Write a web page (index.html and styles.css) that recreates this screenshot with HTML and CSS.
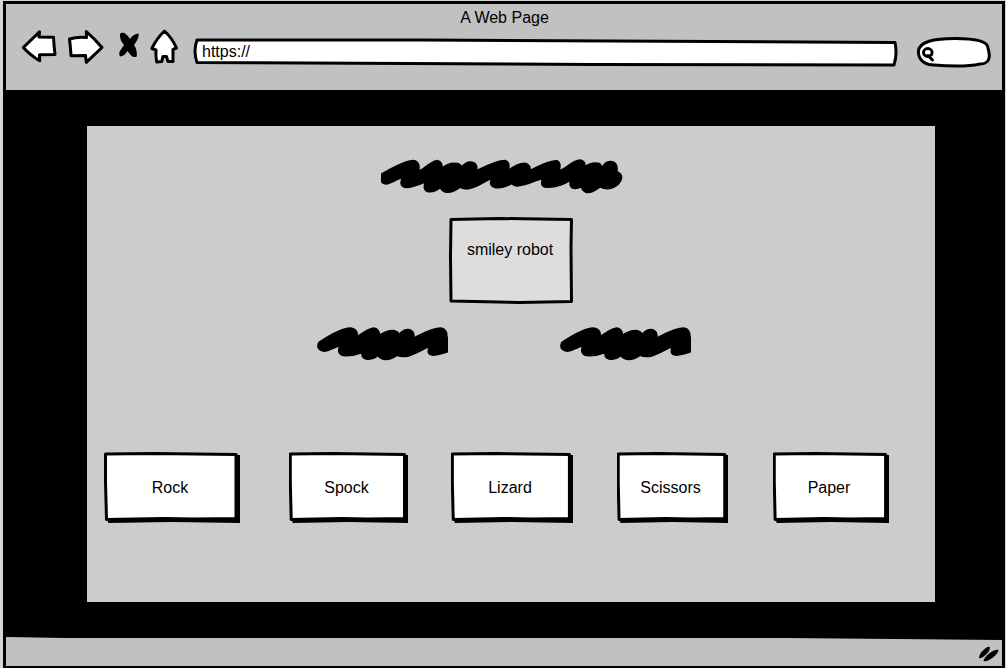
FILE: index.html
```html
<!DOCTYPE html>
<html lang="en">
<head>
<meta charset="utf-8">
<meta name="viewport" content="width=device-width, initial-scale=1">
<title>A Web Page</title>
<link rel="stylesheet" href="styles.css">
</head>
<body>
<svg class="defs" aria-hidden="true">
  <symbol id="card" viewBox="0 0 136 71" preserveAspectRatio="none">
    <path class="shadow" d="M4 3H136V71L68 70L4 71Z"/>
    <path class="ink face" d="M1.5 2L50 1.5L132 2.5V66.5L90 67L60 66.5L2.5 67.5L1.5 30Z"/>
  </symbol>
  <symbol id="scribble" viewBox="36 33 393 105">
    <path class="marker" d="M42 83C72 63 108 40 136 40C154 43 159 54 154 66C172 58 187 42 207 40C221 42 224 54 221 64C235 52 250 47 265 47C275 49 281 54 283 60C291 46 305 43 314 45C326 50 328 58 325 70C352 57 382 40 407 40C421 42 427 52 424 66L435 70V108C410 115 395 120 385 120C368 118 368 110 374 94C352 102 330 117 307 123C295 125 285 124 277 120C265 128 255 134 240 133C228 132 222 126 218 120C210 130 195 133 182 131C172 128 170 120 173 112C155 119 135 122 115 121C102 118 97 104 107 92C92 92 75 106 58 108C40 106 36 95 42 83Z"/>
  </symbol>
</svg>
<div class="window">
  <header class="chrome">
    <div class="title">A Web Page</div>
    <div class="toolbar">
      <button class="tool" type="button" aria-label="Back">
        <svg width="36" height="40" viewBox="21 28 36 40"><path class="ink" d="M23.3 47.500L39.500 31.800L39 37L53.500 37.200Q54 46 55 54.500L39.500 54.700L39.700 60.800Q30 55 23.300 47.500Z"/></svg>
      </button>
      <button class="tool" type="button" aria-label="Forward">
        <svg width="36" height="40" viewBox="67 28 36 40"><path class="ink" d="M69.500 39Q77 36.500 86.500 37.500L86.300 31.600Q95 39 102 47.500L86.300 62.300L85.500 55.500L71 55.700Q70.500 47 69.500 39Z"/></svg>
      </button>
      <button class="tool" type="button" aria-label="Stop">
        <svg width="28" height="40" viewBox="113 28 28 40"><path class="solid" d="M120 34Q121 32 124.500 33Q128 35.500 130 39Q133 34 138.700 33.500Q139.300 38 134 45Q137.500 50 136.800 56.500Q134 58 131 55.500Q129 53 127.500 51Q124.500 56 120 56.500Q118 53 121 49.500L124 45Q119.500 40 120 34Z"/></svg>
      </button>
      <button class="tool" type="button" aria-label="Home">
        <svg width="28" height="40" viewBox="151 28 28 40"><path class="ink" d="M164.500 31Q172 38 176.500 48L173 49.500L173 61.500L168 61.500L166.500 56.500H163L161.700 61.500L156.700 62Q155.500 55 156 50L151.800 48.500Q157 38 164.500 31Z"/></svg>
      </button>
      <div class="field address">
        <svg class="sketch" viewBox="0 0 705 30" preserveAspectRatio="none" aria-hidden="true"><path class="ink" d="M4 2L230 2L702 4.500Q704.500 16 701 27L400 26.500L4 24.500Q0 13 4 2Z"/></svg>
        <input type="text" value="https://" aria-label="Address">
      </div>
      <div class="field search">
        <svg class="sketch" viewBox="0 0 75 32" preserveAspectRatio="none" aria-hidden="true"><path class="ink" d="M2.500 17C1 5 20 2.500 39 2.500C54 2.500 72 4 72 12C75 22 73 28 64 28C50 31 30 30 18 29C10 29 3 25 2.500 17Z"/><path class="ink lens" d="M7.500 16.500a4.300 3.900 0 1 0 8.600 0a4.300 3.900 0 1 0-8.600 0M12 19.500L16.500 24"/></svg>
        <input type="search" aria-label="Search">
      </div>
    </div>
  </header>
  <main class="stage">
    <section class="panel">
      <div class="notes">
        <svg width="246" height="35" viewBox="33 27 738 105" role="img" aria-label="Heading"><path class="marker" d="M36 72C67 55 102 32 130 32C147 35 149 50 144 65C165 58 181 34 202 32C214 34 217 45 214 57C228 44 245 39 262 41C270 43 274 48 275 53C286 38 300 35 311 39C321 44 321 53 318 64C346 50 377 32 405 32C418 36 418 49 413 64C431 50 450 39 467 41C478 45 481 53 479 62C506 50 536 32 560 33C571 37 571 50 566 63C589 58 606 32 630 31C641 33 645 42 644 51C658 41 675 38 688 41C693 45 695 50 696 55C703 40 715 33 727 36C740 40 742 52 740 66C755 71 758 84 749 96C738 112 715 122 690 110C675 120 665 129 648 126C638 122 636 116 635 110C620 116 606 116 602 107C600 102 601 97 602 90C581 103 555 113 530 111C514 110 512 99 521 84C497 89 465 108 440 107C432 106 428 103 425 100C410 108 390 115 375 112C360 108 359 96 368 84C347 88 325 113 290 116C280 116 273 112 270 111C258 120 245 128 230 126C218 124 214 118 211 111C200 122 185 126 172 124C163 120 162 108 167 95C146 104 125 112 108 112C92 110 90 96 100 82C82 84 65 100 48 101C32 100 28 85 36 72Z"/></svg>
      </div>
      <div class="robot">
        <svg class="sketch" viewBox="0 0 125 87" preserveAspectRatio="none" aria-hidden="true"><path class="ink" d="M2 2.500L50 1.500L122.500 2.500L122 30L122.500 84.500L70 85.500L2 84L1.500 40Z"/></svg>
        <span>smiley robot</span>
      </div>
      <div class="notes scores">
        <svg width="131" height="35" role="img" aria-label="Player score"><use href="#scribble"/></svg>
        <svg width="131" height="35" role="img" aria-label="Robot score"><use href="#scribble"/></svg>
      </div>
      <div class="choices">
        <button class="choice rock" type="button"><svg class="sketch" aria-hidden="true"><use href="#card"/></svg><span>Rock</span></button>
        <button class="choice spock" type="button"><svg class="sketch" aria-hidden="true"><use href="#card"/></svg><span>Spock</span></button>
        <button class="choice lizard" type="button"><svg class="sketch" aria-hidden="true"><use href="#card"/></svg><span>Lizard</span></button>
        <button class="choice scissors" type="button"><svg class="sketch" aria-hidden="true"><use href="#card"/></svg><span>Scissors</span></button>
        <button class="choice paper" type="button"><svg class="sketch" aria-hidden="true"><use href="#card"/></svg><span>Paper</span></button>
      </div>
    </section>
  </main>
  <footer class="status">
    <svg class="sketch" viewBox="0 0 996 29" preserveAspectRatio="none" aria-hidden="true"><path class="bar" d="M0 0L60 1H780L996 3V29H0Z"/></svg>
    <svg class="grip" width="20" height="16" viewBox="980 646 20 16" aria-hidden="true"><path class="solid" d="M980 658Q980 654 985 649.500Q989 645.500 991 647.500Q991 651 986.500 655Q982.500 659 980 658ZM984.500 661Q985 657.500 990 653.500Q996 649 999.500 650Q999 653.500 994 657.500Q988 662 984.500 661Z"/></svg>
  </footer>
</div>
</body>
</html>
```

FILE: styles.css
```css
* {
  box-sizing: border-box;
}

body {
  margin: 0;
  background: #d3d8d5;
  color: #000;
  font: 16px/20px "Liberation Sans", Arial, sans-serif;
}

button,
input {
  margin: 0;
  padding: 0;
  border: 0;
  background: none;
  color: inherit;
  font: inherit;
}

svg {
  display: block;
}

.defs {
  position: absolute;
  width: 0;
  height: 0;
}

.window {
  display: flex;
  flex-direction: column;
  min-height: calc(100vh - 1px);
  margin: 1px 1px 0 3px;
  border: 3px solid #000;
  border-bottom-width: 2px;
  background: #000;
}

/* Hand-drawn outlines */
.ink {
  fill: #fff;
  stroke: #000;
  stroke-width: 3;
  stroke-linejoin: round;
  stroke-linecap: round;
  vector-effect: non-scaling-stroke;
}

.solid,
.shadow {
  fill: #000;
}

.marker {
  fill: #000;
  stroke: #000;
  stroke-width: 6;
  stroke-linejoin: round;
}

.sketch {
  position: absolute;
  inset: 0;
  width: 100%;
  height: 100%;
}

/* Browser bar */
.chrome {
  padding: 4px 14px 22px 15px;
  background: #c1c1c1;
}

.title {
  text-align: center;
}

.toolbar {
  display: flex;
  align-items: flex-end;
  gap: 10px;
  margin-right: -3px;
}

.tool svg {
  overflow: visible;
}

.field {
  position: relative;
  height: 30px;
}

.field input {
  position: relative;
  width: 100%;
  height: 28px;
  outline: 0;
}

.address {
  flex: 1;
  margin-left: 4px;
}

.address input {
  padding: 0 9px;
}

.search {
  width: 75px;
  height: 32px;
  margin-left: 8px;
}

.search input {
  padding: 0 8px 0 22px;
}

.lens {
  fill: none;
}

/* Game */
.stage {
  display: flex;
  flex: 1;
  padding: 36px 67px 35px 81px;
}

.panel {
  display: flex;
  flex: 1;
  flex-direction: column;
  align-items: center;
  padding-top: 33px;
  background: #ccc;
}

.notes {
  padding-right: 15px;
}

.robot {
  position: relative;
  width: 125px;
  height: 87px;
  margin: 23px 0 22px;
  padding: 23px 2px 0 0;
  text-align: center;
}

.robot .ink {
  fill: #ddd;
}

.robot span,
.choice span {
  position: relative;
}

.scores {
  display: flex;
  gap: 112px;
}

.choices {
  display: grid;
  grid-template-columns: 185fr 162fr 166fr 156fr 116fr;
  align-self: stretch;
  margin: 91px 46px 0 17px;
}

.choice {
  position: relative;
  height: 71px;
  padding-right: 4px;
}

.rock {
  width: 136px;
}

.spock {
  width: 119px;
}

.lizard {
  width: 122px;
}

.scissors {
  width: 111px;
}

.paper {
  width: 116px;
}

/* Bottom bar */
.status {
  position: relative;
  display: flex;
  justify-content: flex-end;
  padding: 9px 3px 4px;
}

.bar {
  fill: #c1c1c1;
}

.grip {
  position: relative;
}
```
